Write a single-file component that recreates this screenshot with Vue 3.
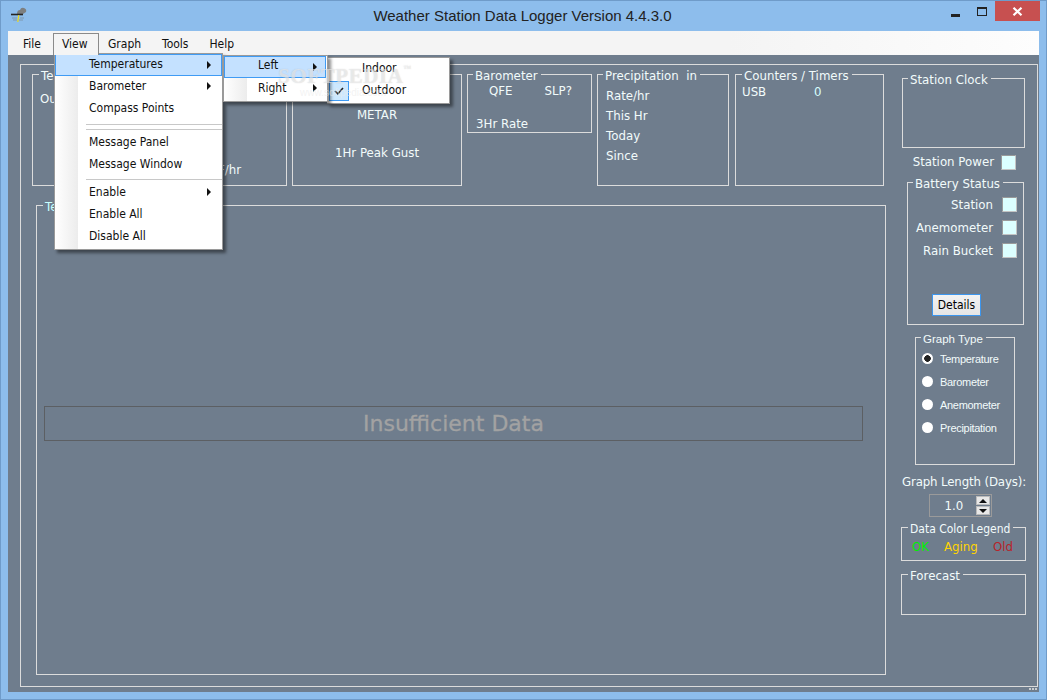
<script setup>
// Menu data for the open View menu and its two submenus
const menuBar = ['File', 'View', 'Graph', 'Tools', 'Help']

const viewMenu = [
  { label: 'Temperatures', arrow: true, active: true },
  { label: 'Barometer', arrow: true },
  { label: 'Compass Points' },
  { sep: true },
  { sep: true },
  { label: 'Message Panel' },
  { label: 'Message Window' },
  { sep: true },
  { label: 'Enable', arrow: true },
  { label: 'Enable All' },
  { label: 'Disable All' }
]

const sideMenu = [
  { label: 'Left', arrow: true, active: true },
  { label: 'Right', arrow: true }
]

const batteries = ['Station', 'Anemometer', 'Rain Bucket']
const graphTypes = ['Temperature', 'Barometer', 'Anemometer', 'Precipitation']
const precipRows = ['Rate/hr', 'This Hr', 'Today', 'Since']
</script>

<template>
  <div class="window">

    <!-- Title bar -->
    <header class="titlebar">
      <svg class="app-icon" width="18" height="18" viewBox="0 0 18 18">
        <path d="M8 7 Q8 3 11 3 Q12 0 15 1 Q18 2 17 5 L14 7 Z" fill="#7d7f80" />
        <path d="M2 7.5 H14" stroke="#262626" stroke-width="1.6" />
        <path d="M9.8 8 L8.8 15" stroke="#e8d820" stroke-width="1.3" />
        <path d="M3 11 H8 M11 11 H15 M4 13 H8 M10 13 H14" stroke="#7f98ae" stroke-width="1" />
      </svg>
      <div class="title">Weather Station Data Logger Version 4.4.3.0</div>
      <div class="controls">
        <span class="ctl-min"></span>
        <span class="ctl-max"></span>
        <span class="ctl-close">
          <svg width="11" height="9" viewBox="0 0 11 9">
            <path d="M1.5 0.8 L9.5 8.2 M9.5 0.8 L1.5 8.2" stroke="#fff" stroke-width="2.2" />
          </svg>
        </span>
      </div>
    </header>

    <!-- Menu bar -->
    <nav class="menubar">
      <span
        v-for="item in menuBar"
        :key="item"
        class="menubar-item"
        :class="{ open: item === 'View' }"
      >{{ item }}</span>
    </nav>

    <!-- Main form -->
    <main class="client">
      <div class="frame">

        <section class="left-col">
          <div class="top-row">
            <fieldset class="group box-temp">
              <legend>Temperature</legend>
              <div class="temp-body">
                <div class="temp-row">Outdoor</div>
                <div class="temp-rate">°F/hr</div>
              </div>
            </fieldset>

            <fieldset class="group box-wind">
              <legend>Wind</legend>
              <div class="wind-row metar">METAR</div>
              <div class="wind-row">1Hr Peak Gust</div>
            </fieldset>

            <fieldset class="group box-baro">
              <legend>Barometer</legend>
              <div class="baro-body">
                <div class="baro-top"><span>QFE</span><span>SLP?</span></div>
                <div class="baro-rate">3Hr Rate</div>
              </div>
            </fieldset>

            <fieldset class="group box-precip">
              <legend>Precipitation&nbsp; in</legend>
              <div class="precip-body">
                <div v-for="row in precipRows" :key="row" class="precip-row">{{ row }}</div>
              </div>
            </fieldset>

            <fieldset class="group box-counters">
              <legend>Counters / Timers</legend>
              <div class="counter-row"><span class="counter-name">USB</span><span class="counter-value">0</span></div>
            </fieldset>
          </div>

          <fieldset class="group box-graph">
            <legend class="cyan">Temperature</legend>
            <div class="graph-body">
              <div class="no-data">Insufficient Data</div>
            </div>
          </fieldset>
        </section>

        <aside class="right-col">
          <fieldset class="group box-clock">
            <legend>Station Clock</legend>
          </fieldset>

          <div class="power-row">
            <span>Station Power</span>
            <span class="lamp"></span>
          </div>

          <fieldset class="group box-battery">
            <legend>Battery Status</legend>
            <div class="battery-body">
              <div v-for="b in batteries" :key="b" class="battery-row">
                <span>{{ b }}</span>
                <span class="lamp"></span>
              </div>
              <button class="details">Details</button>
            </div>
          </fieldset>

          <fieldset class="group box-type">
            <legend>Graph Type</legend>
            <div class="type-body">
              <div v-for="(t, i) in graphTypes" :key="t" class="radio-row">
                <span class="radio" :class="{ checked: i === 0 }"></span>
                <span>{{ t }}</span>
              </div>
            </div>
          </fieldset>

          <div class="length-label">Graph Length (Days):</div>
          <div class="spinner">
            <span class="spin-value">1.0</span>
            <span class="spin-buttons">
              <span class="spin-btn"><i class="tri-up"></i></span>
              <span class="spin-btn"><i class="tri-down"></i></span>
            </span>
          </div>

          <fieldset class="group box-legend">
            <legend>Data Color Legend</legend>
            <div class="legend-row">
              <span class="ok">OK</span>
              <span class="aging">Aging</span>
              <span class="old">Old</span>
            </div>
          </fieldset>

          <fieldset class="group box-forecast">
            <legend>Forecast</legend>
          </fieldset>
        </aside>

      </div>
      <span class="grip"></span>
    </main>

    <!-- Open menus lie over the form -->
    <div class="menu menu-view">
      <template v-for="(item, i) in viewMenu" :key="i">
        <div v-if="item.sep" class="sep"></div>
        <div v-else class="item" :class="{ active: item.active }">
          {{ item.label }}
          <i v-if="item.arrow" class="arrow"></i>
        </div>
      </template>
    </div>

    <div class="menu menu-side">
      <div v-for="item in sideMenu" :key="item.label" class="item" :class="{ active: item.active }">
        {{ item.label }}
        <i class="arrow"></i>
      </div>
    </div>

    <div class="menu menu-temp">
      <div class="item">Indoor</div>
      <div class="item">
        <span class="check">
          <svg width="10" height="8" viewBox="0 0 10 8">
            <path d="M1 4 L3.8 6.8 L9 1" fill="none" stroke="#222" stroke-width="1.6" />
          </svg>
        </span>
        Outdoor
      </div>
    </div>

    <!-- Watermark on top of the screenshot -->
    <div class="mark">SOFTPEDIA<sup>™</sup></div>
    <div class="mark-url">www.softpedia.com</div>
  </div>
</template>

<style>
html, body {
  margin: 0;
  background: #8dbdec;
}
</style>

<style scoped>
.window {
  position: relative;
  width: 1047px;
  height: 700px;
  box-sizing: border-box;
  display: flex;
  flex-direction: column;
  padding: 0 7px 7px;
  background: #8dbdec;
  border: 1px solid #6f9bc9;
  overflow: hidden;
  font-family: "DejaVu Sans", sans-serif;
  font-size: 11.8px;
  color: #f2fbfb;
}

/* Title bar */
.titlebar {
  height: 30px;
  flex: none;
  display: flex;
  align-items: flex-start;
  position: relative;
}

.app-icon {
  margin: 6px 0 0 1px;
}

.title {
  flex: 1;
  margin: 6px 0 0 -19px;
  text-align: center;
  font-family: "Liberation Sans", sans-serif;
  font-size: 15px;
  line-height: 18px;
  color: #222;
  transform: translateX(-1px);
}

.controls {
  position: absolute;
  top: 0;
  right: -1px;
  display: flex;
  align-items: flex-start;
}

.ctl-min {
  width: 9px;
  height: 3px;
  margin: 13px 17px 0 0;
  background: #222;
}

.ctl-max {
  width: 8px;
  height: 6px;
  margin: 6px 8px 0 0;
  border: 1px solid #222;
  border-top-width: 2px;
}

.ctl-close {
  width: 45px;
  height: 20px;
  background: #c75050;
  display: flex;
  align-items: center;
  justify-content: center;
}

/* Menu bar */
.menubar {
  height: 24px;
  flex: none;
  display: flex;
  align-items: flex-end;
  padding-left: 15px;
  background: linear-gradient(90deg, #f4f4f4 0, #f4f4f4 70%, #fdfdfd 100%);
  color: #111;
  font-family: "DejaVu Sans Condensed", "DejaVu Sans", sans-serif;
  font-size: 12px;
}

.menubar-item {
  height: 19px;
  line-height: 16px;
  margin-right: 21px;
}

.menubar-item.open {
  margin: 0 9px 0 -9px;
  width: 46px;
  height: 22px;
  box-sizing: border-box;
  padding-left: 8px;
  line-height: 20px;
  border: 1px solid #8a8a8a;
  border-bottom: none;
  background: #f4f4f4;
  position: relative;
  z-index: 3;
}

/* Form area */
.client {
  flex: 1;
  min-height: 0;
  position: relative;
  box-sizing: border-box;
  padding: 9px 1px 5px 12px;
  background: #6f7d8d;
}

.frame {
  height: 100%;
  box-sizing: border-box;
  display: flex;
  border: 1px solid #dcdcdc;
}

.left-col {
  width: 880px;
  flex: none;
  box-sizing: border-box;
  padding: 1px 0 0 11px;
}

.top-row {
  display: flex;
  align-items: flex-start;
  gap: 5px;
}

.group {
  margin: 0;
  padding: 0;
  min-width: 0;
  box-sizing: border-box;
  border: 1px solid #dcdcdc;
}

legend {
  margin-left: 5px;
  padding: 4px 3px 0 2px;
  line-height: 12px;
  white-space: nowrap;
}

legend.cyan {
  color: #c8ffff;
  margin-left: 6px;
}

/* Top row boxes */
.box-temp { width: 255px; height: 120px; }
.box-temp legend { margin-left: 6px; }
.box-wind { width: 170px; height: 120px; }
.box-baro { width: 125px; height: 67px; }
.box-precip { width: 132px; height: 120px; }
.box-counters { width: 149px; height: 120px; margin-left: 1px; }
.box-counters legend { margin-left: 6px; }

.temp-body { padding-left: 7px; }
.baro-body { padding-left: 8px; }
.precip-body { padding: 4px 0 0 8px; }

.temp-row {
  margin-top: 10px;
  line-height: 14px;
}

.temp-rate {
  margin-top: 57px;
  line-height: 14px;
  text-align: right;
  padding-right: 45px;
}

.wind-row {
  margin-top: 24px;
  line-height: 14px;
  text-align: center;
}

.wind-row.metar {
  margin-top: 26px;
}

.baro-top {
  display: flex;
  gap: 32px;
  padding-left: 13px;
  line-height: 18px;
}

.baro-rate {
  margin-top: 17px;
  line-height: 14px;
}

.precip-row {
  line-height: 20px;
}

.counter-row {
  display: flex;
  padding-left: 6px;
  line-height: 20px;
}

.counter-name {
  width: 72px;
}

.counter-value {
  color: #d8ffff;
}

/* Graph panel */
.box-graph {
  width: 850px;
  height: 478px;
  margin: 11px 0 0 4px;
}

.graph-body {
  padding: 193px 22px 0 7px;
}

.no-data {
  height: 35px;
  box-sizing: border-box;
  border: 1px solid #5c5f63;
  line-height: 33px;
  text-align: center;
  font-size: 22px;
  color: #a2a2a2;
  -webkit-text-stroke: 0.3px #a2a2a2;
}

/* Right column */
.right-col {
  flex: 1;
  min-width: 0;
  padding: 5px 0 0 0;
  box-sizing: border-box;
}

.box-clock {
  width: 123px;
  height: 78px;
  margin-left: 1px;
}

.power-row {
  display: flex;
  justify-content: flex-end;
  align-items: center;
  gap: 7px;
  width: 115px;
  height: 16px;
  margin: 6px 0 0 0;
}

.lamp {
  width: 15px;
  height: 15px;
  flex: none;
  box-sizing: border-box;
  background: #dcffff;
  border: 1px solid #c4c4c4;
  border-top-color: #9a9a9a;
  border-left-color: #9a9a9a;
}

.box-battery {
  width: 117px;
  height: 151px;
  margin: 4px 0 0 6px;
}

.battery-body {
  padding-top: 3px;
}

.battery-row {
  display: flex;
  justify-content: flex-end;
  align-items: center;
  gap: 9px;
  height: 23px;
  padding-right: 6px;
}

.details {
  display: block;
  width: 49px;
  height: 22px;
  margin: 32px 0 0 24px;
  padding: 0;
  font-family: "DejaVu Sans Condensed", "DejaVu Sans", sans-serif;
  font-size: 12px;
  color: #000;
  background: linear-gradient(#f2f2f2, #e5e5e5);
  border: 1px solid #3c96ee;
}

.box-type {
  width: 100px;
  height: 136px;
  margin: 4px 0 0 14px;
}

.box-type legend {
  font-family: "Liberation Sans", sans-serif;
  font-size: 11.5px;
  margin-left: 5px;
}

.type-body {
  padding: 2px 0 0 6px;
}

.radio-row {
  display: flex;
  align-items: center;
  gap: 7px;
  height: 23px;
  font-family: "Liberation Sans", sans-serif;
  font-size: 11px;
  letter-spacing: -0.3px;
}

.radio {
  width: 11px;
  height: 11px;
  border-radius: 50%;
  background: #fff;
  box-sizing: border-box;
  flex: none;
}

.radio.checked {
  background: radial-gradient(circle, #222 0 3px, #fff 3.6px);
}

.length-label {
  margin-top: 9px;
  line-height: 16px;
  white-space: nowrap;
  margin-left: 1px;
  letter-spacing: -0.15px;
}

.spinner {
  width: 63px;
  height: 23px;
  box-sizing: border-box;
  margin: 4px 0 0 28px;
  display: flex;
  align-items: center;
  border: 1px solid #9a9a9a;
}

.spin-value {
  flex: 1;
  text-align: center;
  padding-left: 2px;
}

.spin-buttons {
  width: 14px;
  height: 19px;
  margin-right: 1px;
  display: flex;
  flex-direction: column;
  gap: 1px;
}

.spin-btn {
  flex: 1;
  display: flex;
  align-items: center;
  justify-content: center;
  background: #e8e8e8;
  border: 1px solid #bbb;
  box-sizing: border-box;
}

.tri-up,
.tri-down {
  width: 0;
  height: 0;
  border-left: 4px solid transparent;
  border-right: 4px solid transparent;
}

.tri-up { border-bottom: 4px solid #111; }
.tri-down { border-top: 4px solid #111; }

.box-legend {
  width: 125px;
  height: 42px;
  margin-top: 2px;
}

.box-legend legend {
  font-family: "DejaVu Sans Condensed", "DejaVu Sans", sans-serif;
  font-size: 12px;
  margin-left: 6px;
}

.legend-row {
  display: flex;
  padding: 4px 0 0 10px;
  line-height: 17px;
}

.ok { color: #00f000; width: 32px; }
.aging { color: #ffd400; width: 49px; }
.old { color: #b8232a; }

.box-forecast {
  width: 125px;
  height: 49px;
  margin-top: 5px;
}

.box-forecast legend { margin-left: 6px; }

.grip {
  position: absolute;
  right: 2px;
  bottom: 2px;
  width: 8px;
  height: 2px;
  background: repeating-linear-gradient(90deg, #c8ccd0 0 2px, transparent 2px 3px);
}

/* Popup menus */
.menu {
  position: absolute;
  box-sizing: border-box;
  background: #fff;
  border: 1px solid #9a9a9a;
  box-shadow: 3px 3px 3px rgba(0, 0, 0, 0.45);
  color: #111;
  line-height: 22px;
  font-family: "DejaVu Sans Condensed", "DejaVu Sans", sans-serif;
  font-size: 12px;
}

.menu-view {
  left: 53px;
  top: 52px;
  width: 169px;
  height: 197px;
  z-index: 2;
  background: linear-gradient(90deg, #fff 0, #ececec 23px, #fff 23px);
}

.menu-side {
  left: 222px;
  top: 54px;
  width: 105px;
  height: 47px;
  z-index: 4;
  background: linear-gradient(90deg, #fff 0, #ececec 23px, #fff 23px);
}

.menu-temp {
  left: 326px;
  top: 56px;
  width: 123px;
  height: 47px;
  z-index: 3;
  border-left: none;
  line-height: 20px;
}

.item {
  position: relative;
  height: 22px;
  box-sizing: border-box;
  padding-left: 34px;
}

.menu-temp .item {
  padding-left: 35px;
}

.item.active {
  background: #c4e1ff;
  border: 1px solid #3f9bf4;
  padding-left: 33px;
  line-height: 18px;
  margin-bottom: -1px;
}

.menu-side .item.active {
  margin-right: 1px;
  line-height: 16px;
}

.arrow {
  position: absolute;
  right: 11px;
  top: 7px;
  width: 0;
  height: 0;
  border-top: 4px solid transparent;
  border-bottom: 4px solid transparent;
  border-left: 4px solid #111;
}

.menu-side .arrow {
  right: 10px;
}

.item.active .arrow {
  top: 6px;
  right: 10px;
}

.menu-side .item.active .arrow {
  right: 8px;
}

.sep {
  height: 4px;
  margin-left: 31px;
  border-bottom: 1px solid #c8c8c8;
}

.item:nth-child(3) + .sep {
  margin-top: 1px;
}

.sep + .item {
  margin-top: 1px;
}

.check {
  position: absolute;
  left: 2px;
  top: 1px;
  width: 20px;
  height: 20px;
  box-sizing: border-box;
  display: flex;
  align-items: center;
  justify-content: center;
  background: #cce8ff;
  border: 1px solid #3f9bf4;
}

/* Watermark */
.mark {
  position: absolute;
  left: 277px;
  top: 54px;
  z-index: 5;
  font-family: "Liberation Serif", serif;
  font-weight: 700;
  font-size: 21px;
  letter-spacing: 0.6px;
  line-height: 28px;
  color: rgba(255, 255, 255, 0.5);
  text-shadow: 0 0 1px rgba(120, 120, 120, 0.35);
}

.mark sup {
  font-size: 8px;
  vertical-align: 12px;
}

.mark-url {
  position: absolute;
  left: 299px;
  top: 86px;
  z-index: 5;
  font-family: "Liberation Sans", sans-serif;
  font-size: 10px;
  line-height: 12px;
  color: rgba(235, 235, 235, 0.6);
}
</style>
